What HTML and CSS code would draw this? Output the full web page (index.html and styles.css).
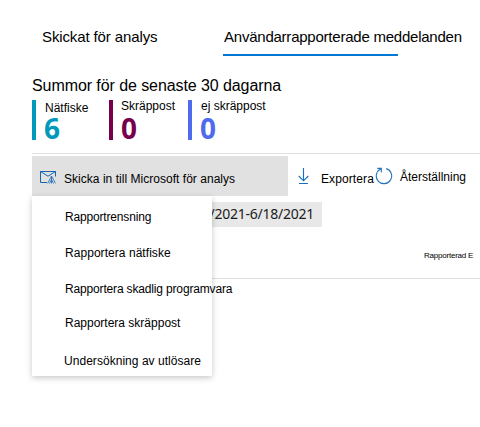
FILE: index.html
```html
<!DOCTYPE html>
<html lang="sv">
<head>
<meta charset="utf-8">
<title>Inskickade meddelanden</title>
<link rel="stylesheet" href="styles.css">
</head>
<body>
<main class="page">
  <nav class="tabs">
    <a class="tab tab-first">Skickat för analys</a>
    <a class="tab tab-active">Användarrapporterade meddelanden</a>
  </nav>
  <h1 class="title">Summor för de senaste 30 dagarna</h1>
  <section class="stats">
    <div class="stat phish"><span class="label">Nätfiske</span><b class="num">6</b></div>
    <div class="stat spam"><span class="label">Skräppost</span><b class="num">0</b></div>
    <div class="stat clean"><span class="label">ej skräppost</span><b class="num">0</b></div>
  </section>
  <div class="toolbar">
    <div class="submit">
      <svg class="mail" width="17" height="15" viewBox="0 0 17 15" fill="none" stroke="#1765b0">
        <path d="M7 12.5H.5v-11h15v5M.5 1.5l7.5 4.7 7.5-4.7"/>
        <path stroke-width=".8" d="M7.7 13.4l3.8-7.4 4 7.4M11.5 6.5v7M11.5 9.5l-2 4M11.5 9.5l2 4"/>
      </svg>
      <span class="submit-text">Skicka in till Microsoft för analys</span>
      <div class="menu">
        <span class="item i1">Rapportrensning</span>
        <span class="item i2">Rapportera nätfiske</span>
        <span class="item i3">Rapportera skadlig programvara</span>
        <span class="item i4">Rapportera skräppost</span>
        <span class="item i5">Undersökning av utlösare</span>
      </div>
    </div>
    <svg class="download" width="11" height="17" viewBox="0 0 11 17" fill="none" stroke="#1570c4" stroke-width="1.1">
      <path d="M5.5 0v12.6M.7 8l4.8 4.8L10.3 8M1 15.5h9"/>
    </svg>
    <span class="export">Exportera</span>
    <svg class="reset-icon" width="18" height="18" viewBox="0 0 18 18" fill="none" stroke="#2474bc" stroke-width="1.1">
      <path d="M11.2 1.6A7.7 7.7 0 1 1 5.7 2M2.3 1.4h4v4"/>
    </svg>
    <span class="reset">Återställning</span>
  </div>
  <div class="filter"><span class="range">6/11/2021-6/18/2021</span></div>
  <div class="columns"><span class="column">Rapporterad E</span></div>
</main>
</body>
</html>
```
FILE: styles.css
```css
* { box-sizing: border-box; }
body {
  margin: 0;
  background: #fff;
  color: #000;
  font: 12px/16px "Liberation Sans", Arial, sans-serif;
  white-space: nowrap;
  overflow: hidden;
}
.page { width: 480px; height: 427px; padding-left: 32px; overflow: hidden; }
.tabs { display: flex; height: 56px; padding-left: 10px; }
.tab { height: 56px; padding-top: 27px; font-size: 15px; line-height: 20px; }
.tab-first { width: 181px; letter-spacing: -0.12px; }
.tab-active { width: 175px; padding-left: 1px; border-bottom: 2px solid #0078d4; letter-spacing: -0.23px; }
.title { margin: 20px 0 0; height: 24px; font-size: 16px; line-height: 20px; font-weight: 400; letter-spacing: -0.08px; }
.stats { display: flex; height: 53px; }
.stat { height: 40px; border-left: 4px solid; padding-left: 8px; display: flex; flex-direction: column; }
.label { color: #000; height: 12px; line-height: 12px; }
.num { font: 700 28px/32px "Noto Sans", "Open Sans", sans-serif; height: 32px; }
.phish { width: 77px; color: #0099bc; padding-left: 9px; }
.phish .label { position: relative; top: 2px; }
.phish .num { margin-left: -1px; }
.spam { width: 79px; color: #77004d; }
.clean { color: #4f6bed; padding-left: 9px; }
.clean .num { margin-left: -1px; }
.toolbar { display: flex; height: 43px; border-top: 1px solid #e1e1e1; padding-top: 2px; }
.submit { position: relative; width: 256px; height: 40px; background: #e1e1e1; padding-left: 8px; display: flex; }
.mail { margin-top: 14px; }
.submit-text { margin: 15px 0 0 7px; letter-spacing: 0.03px; }
.download { margin: 12px 0 0 10px; }
.export { width: 53px; margin: 15px 0 0 12px; letter-spacing: 0.1px; }
.reset-icon { margin: 11px 0 0 1px; }
.reset { margin: 13px 0 0 7px; }
.menu {
  position: absolute;
  left: 0;
  top: 40px;
  width: 180px;
  height: 180px;
  padding: 13px 0 0 33px;
  background: #fff;
  box-shadow: 0 2px 6px rgba(0, 0, 0, .22);
  display: flex;
  flex-direction: column;
}
.item { height: 36px; flex: none; }
.i1 { letter-spacing: -0.17px; }
.i2 { letter-spacing: 0.05px; }
.i3 { letter-spacing: -0.16px; height: 34px; }
.i4 { height: 38px; }
.i5 { margin-left: -1px; height: 16px; letter-spacing: 0.04px; }
.filter { display: flex; height: 31px; padding-top: 6px; }
.range {
  width: 290px;
  height: 25px;
  padding-right: 8px;
  background: #e8e8e8;
  color: #1b1b1b;
  font: 14px/23px "Noto Sans", "Open Sans", sans-serif;
  letter-spacing: -0.25px;
  text-align: right;
}
.columns { height: 52px; border-bottom: 1px solid #e1e1e1; padding: 19px 0 0 392px; }
.column { font-size: 8px; letter-spacing: -0.22px; }
```
